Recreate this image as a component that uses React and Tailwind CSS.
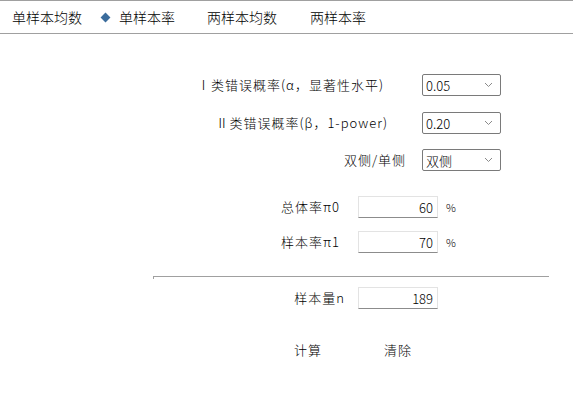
import React, { useState } from 'react';

const cjk = { fontFamily: '"Noto Sans CJK SC", "Liberation Sans", sans-serif' };

const tabs = ['单样本均数', '单样本率', '两样本均数', '两样本率'];

const Chevron = () => (
    <svg width="9" height="6" viewBox="0 0 9 6" className="text-[#8a8a8a]">
        <path d="M1 1 L4.5 4.5 L8 1" fill="none" stroke="currentColor" strokeWidth="1" />
    </svg>
);

const Select = ({ value }) => (
    <div className="w-[79px] h-[22px] border border-[#7a7a7a] rounded-[2px] bg-white flex items-center justify-between pl-[3px] pr-[7px]">
        <span className="text-[13px] text-black leading-none" style={cjk}>{value}</span>
        <Chevron />
    </div>
);

const NumInput = ({ value }) => (
    <div className="w-[80px] h-[22px] bg-white border border-[#e3e3e3] border-b-[#8c8c8c] flex items-center justify-end pr-[4px]">
        <span className="text-[13px] text-black leading-none" style={cjk}>{value}</span>
    </div>
);

const App = () => {
    const [active, setActive] = useState(1);

    return (
        <div className="w-[573px] h-[405px] bg-white text-black overflow-hidden font-light" style={cjk}>
            {/* Tab bar */}
            <div className="h-[34px] border-t border-b border-[#a0a0a0] flex items-center text-[14px]">
                {tabs.map((t, i) => (
                    <button
                        key={t}
                        onClick={() => setActive(i)}
                        className={`flex items-center ${i === 0 ? 'ml-[12px]' : ''} ${i === 1 ? 'ml-[20px]' : ''} ${i === 2 ? 'ml-[32px]' : ''} ${i === 3 ? 'ml-[33px]' : ''}`}
                    >
                        {active === i && <span className="w-[7px] h-[7px] bg-[#3b6c9c] rotate-45 mr-[10px]" />}
                        <span>{t}</span>
                    </button>
                ))}
            </div>

            {/* Form */}
            <div className="flex flex-col text-[13px]">
                <div className="mt-[40px] flex items-center justify-end pr-[72px]">
                    <span className="mr-[38px] tracking-[1px]">Ⅰ类错误概率(α，显著性水平)</span>
                    <Select value="0.05" />
                </div>
                <div className="mt-[16px] flex items-center justify-end pr-[72px]">
                    <span className="mr-[34px] tracking-[1px]">Ⅱ类错误概率(β，1-power)</span>
                    <Select value="0.20" />
                </div>
                <div className="mt-[15px] flex items-center justify-end pr-[72px]">
                    <span className="mr-[16px] tracking-[1px]">双侧/单侧</span>
                    <Select value="双侧" />
                </div>

                <div className="mt-[25px] flex items-center">
                    <span className="w-[340px] text-right tracking-[1px]">总体率π0</span>
                    <div className="ml-[18px]"><NumInput value="60" /></div>
                    <span className="ml-[8px] text-[11px]">%</span>
                </div>
                <div className="mt-[13px] flex items-center">
                    <span className="w-[340px] text-right tracking-[1px]">样本率π1</span>
                    <div className="ml-[18px]"><NumInput value="70" /></div>
                    <span className="ml-[8px] text-[11px]">%</span>
                </div>

                <div className="mt-[23px] ml-[153px] w-[396px] h-[3px] border-t border-l border-[#a0a0a0]" />

                <div className="mt-[8px] flex items-center">
                    <span className="w-[345px] text-right tracking-[1px]">样本量n</span>
                    <div className="ml-[13px]"><NumInput value="189" /></div>
                </div>

                <div className="mt-[31px] flex items-center">
                    <button className="ml-[294px] text-[13px] tracking-[1px]">计算</button>
                    <button className="ml-[62px] text-[13px] tracking-[1px]">清除</button>
                </div>
            </div>
        </div>
    );
};

export default App;
